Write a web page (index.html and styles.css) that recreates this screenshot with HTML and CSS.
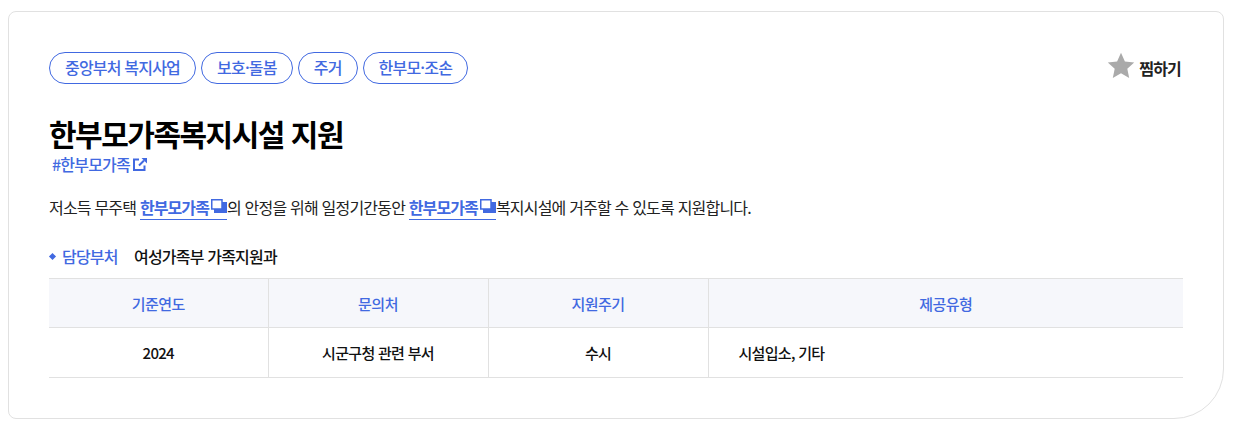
FILE: index.html
```html
<!DOCTYPE html>
<html lang="ko">
<head>
<meta charset="UTF-8" />
<meta name="viewport" content="width=device-width, initial-scale=1" />
<title>한부모가족복지시설 지원</title>
<link rel="stylesheet" href="styles.css">
</head>
<body>
  <div class="card">
    <div class="card-top">
      <ul class="tags">
        <li class="tag">중앙부처 복지사업</li>
        <li class="tag">보호·돌봄</li>
        <li class="tag">주거</li>
        <li class="tag">한부모·조손</li>
      </ul>
      <button class="fav" type="button">
        <svg class="fav-star" width="28" height="28" viewBox="0 0 28 28"><path d="M14 .8l3.900 8.600 9.300 1-6.900 6.300 1.900 9.200-8.200-4.700-8.200 4.700 1.900-9.200L.8 10.400l9.300-1z"/></svg>
        찜하기
      </button>
    </div>

    <h2 class="title">한부모가족복지시설 지원</h2>
    <a class="hash" href="#">#한부모가족
      <svg class="hash-icon" width="14" height="13" viewBox="0 0 14 13"><path class="hash-box" d="M6 1.500H1v10.500h10.500V7.500"/><path class="hash-line" d="M11 2.500L6 7.500"/><path class="hash-tip" d="M8.500 0H14v5.500z"/></svg>
    </a>

    <p class="desc">저소득 무주택 <a class="term" href="#">한부모가족<svg class="term-icon" width="16" height="14" viewBox="0 0 16 14"><path class="term-back" d="M3 3h13v11H3z"/><path class="term-front" d="M.75.75H11V10H.75z"/></svg></a>의 안정을 위해 일정기간동안 <a class="term" href="#">한부모가족<svg class="term-icon" width="16" height="14" viewBox="0 0 16 14"><path class="term-back" d="M3 3h13v11H3z"/><path class="term-front" d="M.75.75H11V10H.75z"/></svg></a>복지시설에 거주할 수 있도록 지원합니다.</p>

    <div class="dept">
      <span class="dept-label">담당부처</span>
      <span class="dept-name">여성가족부 가족지원과</span>
    </div>

    <table class="info">
      <thead>
        <tr>
          <th>기준연도</th>
          <th>문의처</th>
          <th>지원주기</th>
          <th>제공유형</th>
        </tr>
      </thead>
      <tbody>
        <tr>
          <td>2024</td>
          <td>시군구청 관련 부서</td>
          <td>수시</td>
          <td class="left">시설입소, 기타</td>
        </tr>
      </tbody>
    </table>
  </div>
</body>
</html>
```

FILE: styles.css
```css
* {
  margin: 0; padding: 0; box-sizing: border-box;
}
body {
  font-family: "Noto Sans CJK KR", "Noto Sans", sans-serif;
  background: #fff;
  color: #111;
  padding: 11px 21px 8px 8px;
}
a {
  text-decoration: none;
}
.card {
  height: 408px;
  padding: 40px 40px 0;
  background: #fff;
  border: 1px solid #e1e1e1;
  border-radius: 8px 8px 50px 8px;
}
.card-top {
  display: flex;
  justify-content: space-between;
  align-items: center;
}
.tags {
  display: flex;
  gap: 5px;
  list-style: none;
}
.tag {
  height: 32px;
  padding: 0 15px;
  border: 1px solid #4169e1;
  border-radius: 16px;
  color: #4169e1;
  font-size: 16px;
  font-weight: 500;
  line-height: 29px;
  letter-spacing: -0.8px;
}
.fav {
  display: flex;
  align-items: center;
  gap: 4px;
  margin-right: 2px;
  border: none;
  background: none;
  font-family: inherit;
  font-size: 16px;
  font-weight: 700;
  letter-spacing: -0.8px;
  color: #222;
}
.fav-star {
  margin-bottom: 4px;
  fill: #aaa;
}
.title {
  margin-top: 30px;
  font-size: 30px;
  font-weight: 700;
  line-height: 38px;
  letter-spacing: -1.5px;
  color: #000;
}
.hash {
  display: flex;
  align-items: center;
  gap: 3px;
  margin-top: 1px;
  margin-left: 3px;
  color: #4169e1;
  font-size: 16px;
  font-weight: 500;
  line-height: 22px;
  letter-spacing: -0.8px;
}
.hash-icon {
  fill: none;
}
.hash-box,
.hash-line {
  stroke: #4169e1;
  stroke-width: 2;
  fill: none;
}
.hash-tip {
  fill: #4169e1;
}
.desc {
  margin-top: 20px;
  font-size: 16px;
  line-height: 24px;
  letter-spacing: -0.8px;
  color: #222;
}
.term {
  display: inline-block;
  line-height: 24px;
  border-bottom: 1px solid #4169e1;
  color: #4169e1;
  font-weight: 700;
  letter-spacing: -0.9px;
}
.term-icon {
  margin-left: 2px;
  vertical-align: 1px;
}
.term-back {
  fill: #4169e1;
}
.term-front {
  fill: #fff;
  stroke: #4169e1;
  stroke-width: 1.5;
}
.dept {
  display: flex;
  align-items: center;
  margin-top: 24px;
  font-size: 16px;
  line-height: 24px;
  letter-spacing: -0.8px;
}
.dept-label {
  display: flex;
  align-items: center;
  gap: 7px;
  width: 85px;
  color: #4169e1;
  font-weight: 500;
}
.dept-label::before {
  content: "";
  width: 5px;
  height: 5px;
  margin-left: 1px;
  background: #4169e1;
  transform: rotate(45deg);
}
.dept-name {
  font-weight: 500;
}
.info {
  width: 100%;
  margin-top: 10px;
  border-collapse: collapse;
  table-layout: fixed;
  border-top: 1px solid #e1e1e1;
  font-size: 15px;
  letter-spacing: -0.7px;
}
.info th,
.info td {
  border-bottom: 1px solid #e1e1e1;
  border-left: 1px solid #e1e1e1;
  text-align: center;
}
.info th:first-child,
.info td:first-child {
  border-left: none;
  width: 219px;
}
.info th:nth-child(2),
.info th:nth-child(3) {
  width: 220px;
}
.info th {
  height: 49px;
  background: #f6f7fb;
  color: #4169e1;
  font-weight: 500;
  letter-spacing: -0.5px;
}
.info td {
  height: 50px;
  font-weight: 500;
}
.info td.left {
  padding-left: 30px;
  text-align: left;
}
```
